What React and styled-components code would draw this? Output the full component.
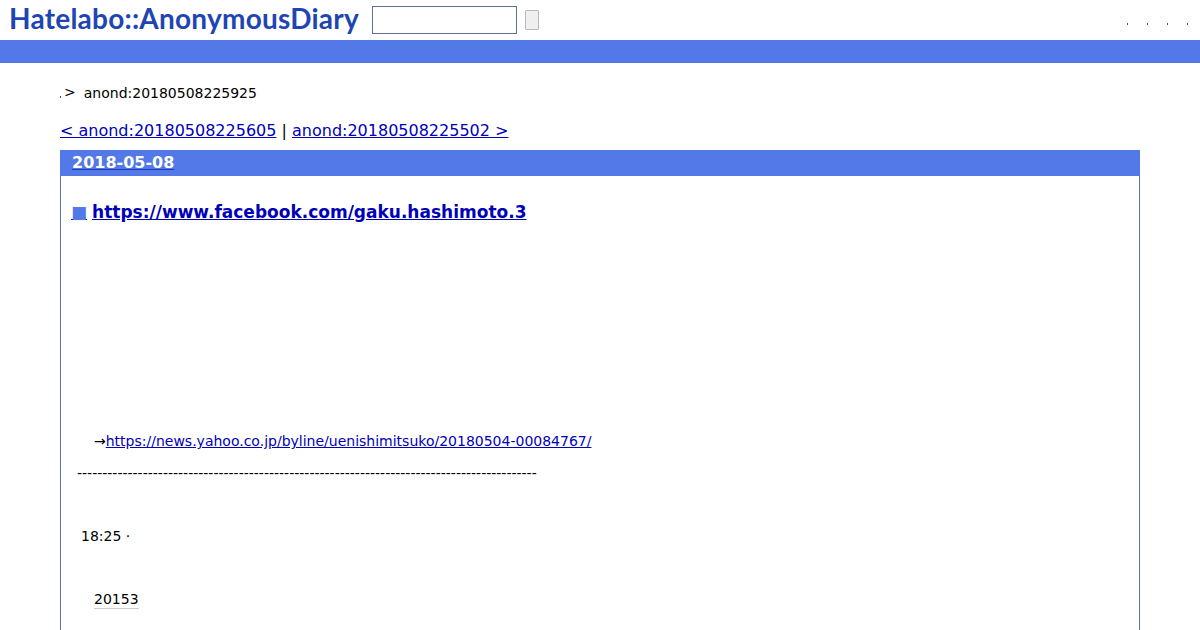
import React from "react";
import styled, { createGlobalStyle } from "styled-components";

const GlobalStyle = createGlobalStyle`
    html, body {
        margin: 0;
        height: 630px;
        overflow: hidden;
        background: #fff;
        color: #000;
        font-family: "DejaVu Sans", sans-serif;
    }
    a {
        color: #0000b8;
    }
`;

const App = () => (
    <>
        <GlobalStyle />
        <Header>
            <Logo href="#">Hatelabo::AnonymousDiary</Logo>
            <SearchBox type="text" />
            <SearchButton type="button" />
            <UserNav>
                {[0, 1, 2, 3].map(i => (
                    <NavDot key={i} />
                ))}
            </UserNav>
        </Header>
        <Bar />
        <Main>
            <Breadcrumb>
                <TinyDot />
                <Chevron>&gt;</Chevron>
                <span>anond:20180508225925</span>
            </Breadcrumb>
            <Pager>
                <a href="#">&lt; anond:20180508225605</a> | <a href="#">anond:20180508225502 &gt;</a>
            </Pager>
            <Day>
                <DayTitle>
                    <a href="#">2018-05-08</a>
                </DayTitle>
                <DayBody>
                    <EntryTitle>
                        <SquareLink href="#">■</SquareLink>
                        <a href="#">https://www.facebook.com/gaku.hashimoto.3</a>
                    </EntryTitle>
                    <SourceLine>
                        →<a href="#">https://news.yahoo.co.jp/byline/uenishimitsuko/20180504-00084767/</a>
                    </SourceLine>
                    <Rule>{"-".repeat(91)}</Rule>
                    <TimeLine>18:25 ·</TimeLine>
                    <CountLine>
                        <Count>20153</Count>
                    </CountLine>
                </DayBody>
            </Day>
        </Main>
    </>
);

const Header = styled.header`
    display: flex;
    align-items: center;
    height: 40px;
    padding: 0 12px 0 9px;
`;

const Logo = styled.a`
    width: 350px;
    margin: 0 13px 4px 0;
    font-family: "Lato", sans-serif;
    font-size: 28px;
    font-weight: 700;
    line-height: 36px;
    letter-spacing: 0.23px;
    white-space: nowrap;
    color: #1f45b5;
    text-decoration: none;
`;

const SearchBox = styled.input`
    box-sizing: border-box;
    width: 145px;
    height: 28px;
    margin: 0 8px 0 0;
    padding: 0;
    border: 1px solid #607099;
    background: #fff;
`;

const SearchButton = styled.button`
    box-sizing: border-box;
    width: 14px;
    height: 20px;
    padding: 0;
    border: 1px solid #b8b8b8;
    border-radius: 1px;
    background: #efefef;
`;

const UserNav = styled.nav`
    display: flex;
    gap: 19px;
    margin-left: auto;
    padding-top: 7px;
`;

const NavDot = styled.span`
    width: 1px;
    height: 2px;
    background: #555;
`;

const Bar = styled.div`
    height: 23px;
    background: #5279e7;
`;

const Main = styled.main`
    padding: 0 60px;
`;

const Breadcrumb = styled.div`
    display: flex;
    align-items: baseline;
    height: 17px;
    margin-top: 22px;
    font-size: 14px;
    line-height: 17px;
`;

const TinyDot = styled.span`
    width: 1px;
    height: 2px;
    margin-right: 3px;
    background: #444;
`;

const Chevron = styled.span`
    margin-right: 8px;
    position: relative;
    top: -1px;
`;

const Pager = styled.div`
    height: 19px;
    margin-top: 19px;
    font-size: 16px;
    line-height: 19px;
`;

const Day = styled.section`
    box-sizing: border-box;
    width: 1080px;
    height: 600px;
    margin-top: 10px;
    border: 1px solid #607099;
    border-top: none;
`;

const DayTitle = styled.h2`
    height: 26px;
    margin: 0 -1px;
    padding-left: 12px;
    background: #5279e7;
    font-size: 16px;
    font-weight: 700;
    line-height: 26px;

    a {
        color: #fff;
        text-decoration-color: #2438b8;
    }
`;

const DayBody = styled.div`
    padding: 0 10px;
`;

const EntryTitle = styled.h3`
    height: 21px;
    margin: 26px 0 0;
    font-size: 17px;
    font-weight: 700;
    line-height: 21px;
`;

const SquareLink = styled.a`
    margin-right: 5px;
    color: #5279e7;
    font-size: 17px;
    font-weight: 400;
    text-decoration-color: #0000b8;
`;

const SourceLine = styled.p`
    height: 17px;
    margin: 210px 0 0;
    padding-left: 23px;
    font-size: 14px;
    line-height: 17px;
`;

const Rule = styled.p`
    height: 17px;
    margin: 15px 0 0;
    padding-left: 6px;
    font-size: 14px;
    line-height: 17px;
    white-space: nowrap;
`;

const TimeLine = styled.p`
    height: 17px;
    margin: 46px 0 0;
    padding-left: 10px;
    font-size: 14px;
    line-height: 17px;
`;

const CountLine = styled.p`
    height: 19px;
    margin: 46px 0 0;
    padding-left: 23px;
    font-size: 14px;
    line-height: 17px;
`;

const Count = styled.span`
    display: inline-block;
    border-bottom: 1px solid #ccc;
`;

export default App;
